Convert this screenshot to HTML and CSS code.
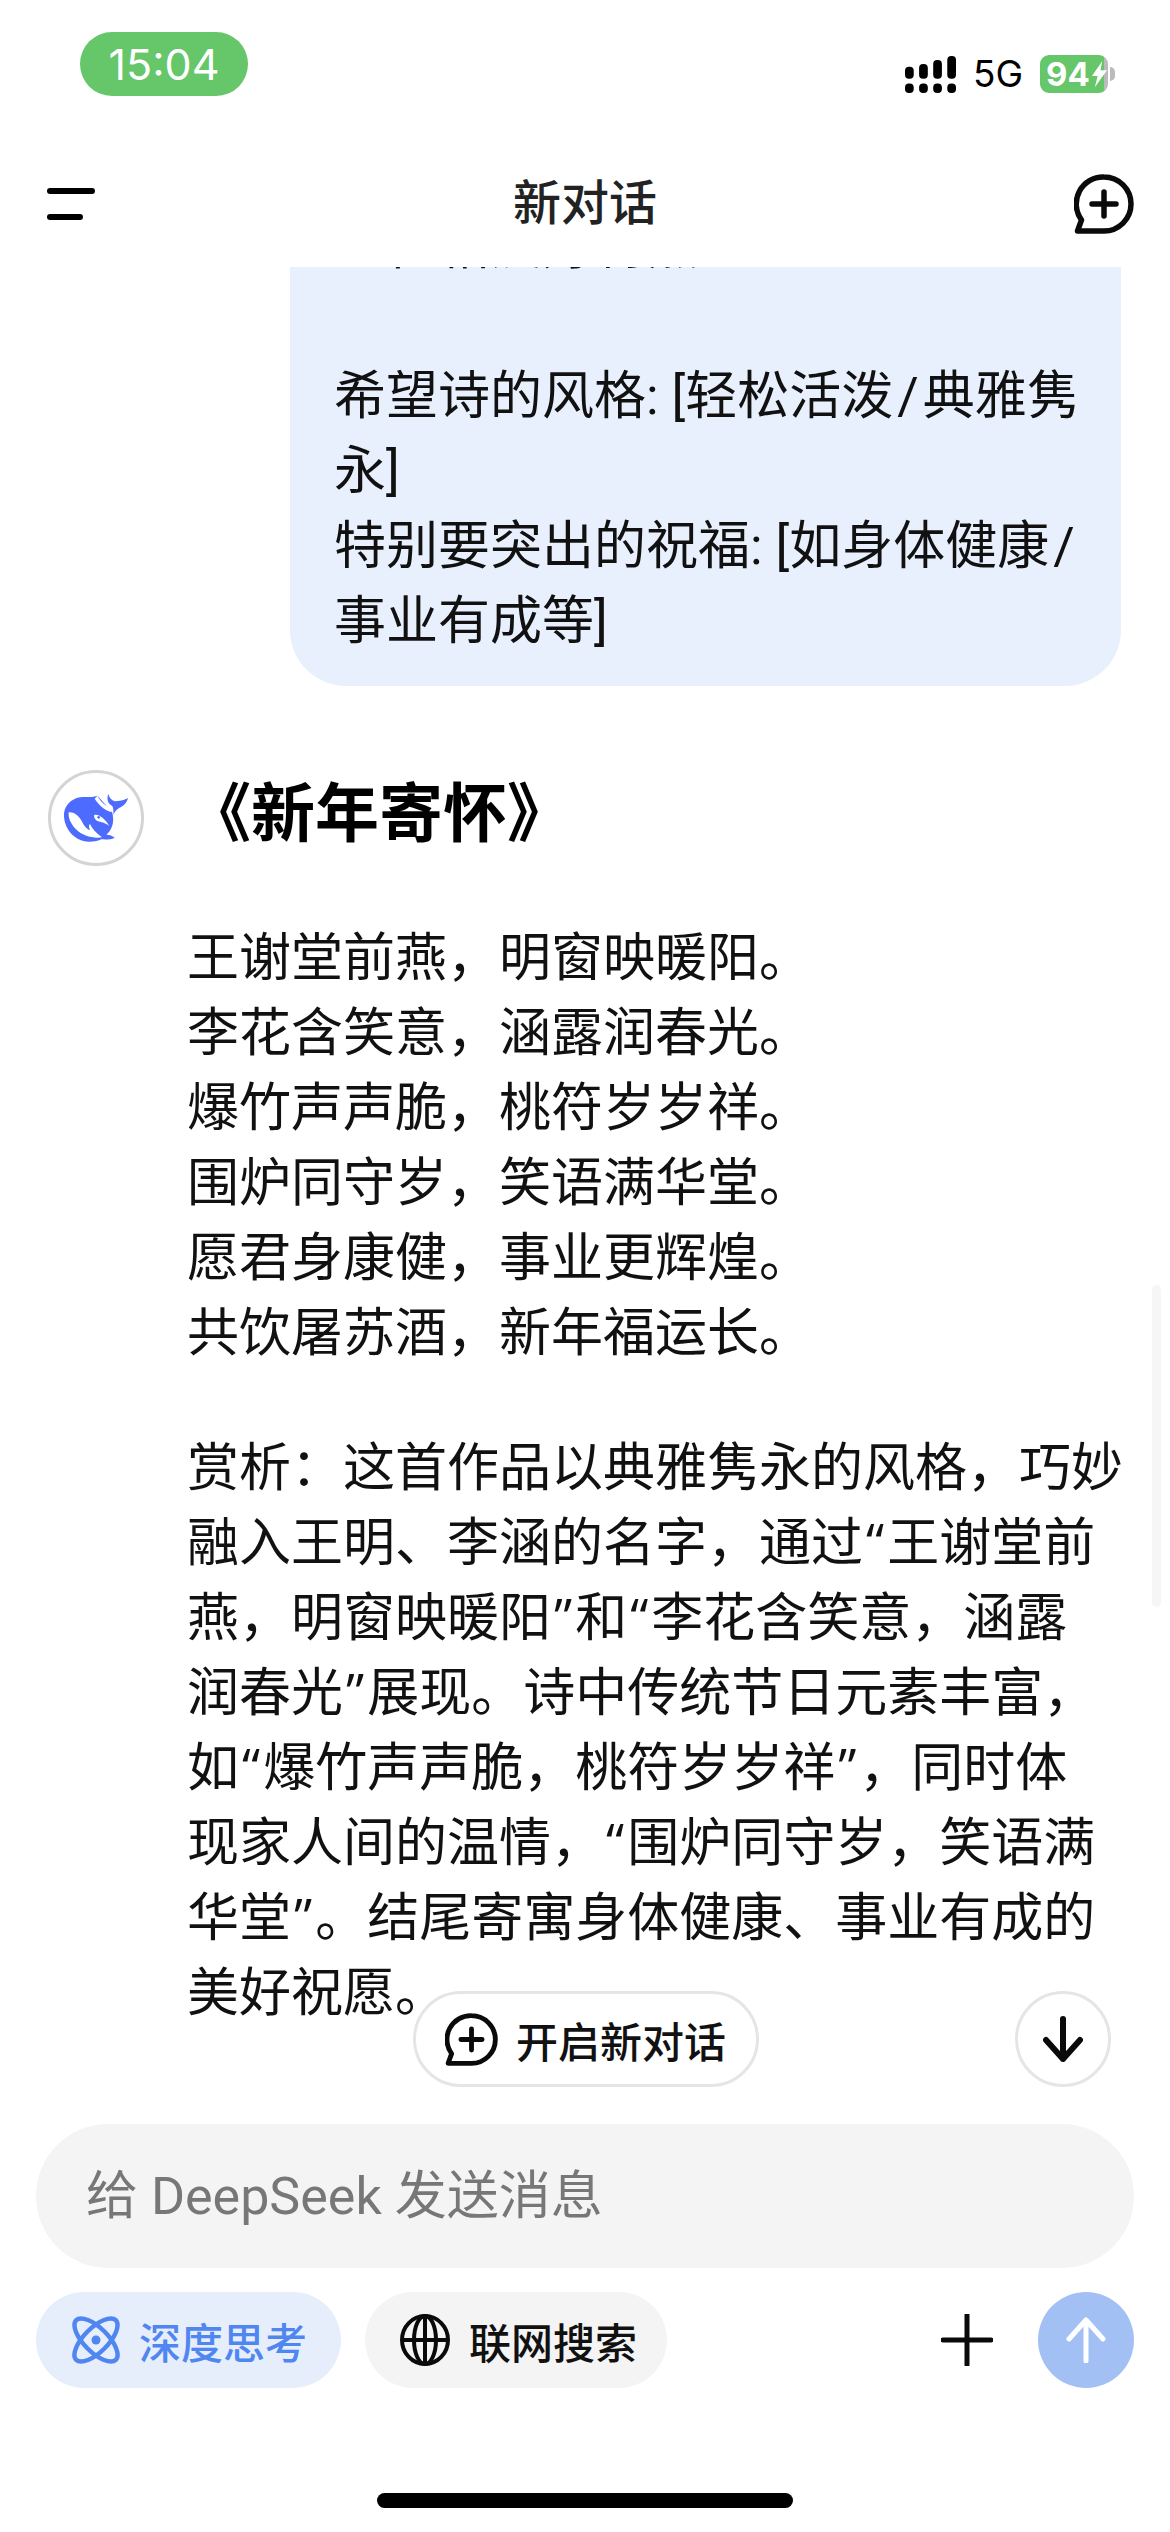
FILE: index.html

```html
<!DOCTYPE html>
<html lang="zh-CN">
<head>
    <meta charset="UTF-8">
    <meta name="viewport" content="width=device-width, initial-scale=1.0">
    <title>新对话</title>
    <link rel="stylesheet" href="styles.css">
</head>
<body>
    <div class="app">
        <!-- Status bar -->
        <div class="status">
            <div class="time">15:04</div>
            <div class="indicators">
                <svg class="signal" viewBox="0 0 152 110">
                    <rect x="0" y="32" width="26" height="36" rx="12"/>
                    <rect x="42" y="24" width="26" height="44" rx="12"/>
                    <rect x="84" y="12" width="26" height="56" rx="12"/>
                    <rect x="126" y="0" width="26" height="68" rx="12"/>
                    <rect x="0" y="82" width="26" height="28" rx="12"/>
                    <rect x="42" y="82" width="26" height="28" rx="12"/>
                    <rect x="84" y="82" width="26" height="28" rx="12"/>
                    <rect x="126" y="82" width="26" height="28" rx="12"/>
                </svg>
                <span class="net">5G</span>
                <div class="battery">
                    <div class="battery-body">
                        <span>94</span>
                        <svg class="bolt" viewBox="0 0 16 28"><path d="M11 0 L0 16 H6 L3 28 L16 10 H9 Z"/></svg>
                    </div>
                    <div class="battery-tip"></div>
                </div>
            </div>
        </div>

        <!-- Top bar -->
        <header class="topbar">
            <div class="menu"><span></span><span></span></div>
            <h1>新对话</h1>
            <svg class="new-icon" viewBox="0 0 60 60">
                <path class="bubble-line" d="M30 3 A27 27 0 0 1 30 57 H3.5 L7.5 46 A27 27 0 0 1 30 3 Z"/>
                <path class="bubble-line" d="M30 18 V42 M18 30 H42"/>
            </svg>
        </header>

        <!-- Conversation -->
        <main class="chat">
            <div class="user-msg">
                &emsp;性格爱好特点<br>
                <br>
                希望诗的风格: [轻松活泼<span class="slash">/</span>典雅隽<br>
                永]<br>
                特别要突出的祝福: [如身体健康<span class="slash">/</span><br>
                事业有成等]
            </div>

            <div class="answer">
                <div class="avatar">
                    <svg viewBox="0 0 192 144">
                        <path class="whale" d="M100 5 C78 13 55 6 38 12 C12 22 0 42 0 64 C0 102 30 143 75 143 C92 143 104 141 112 136 C125 137 140 137 152 131 C146 125 136 122 127 122 C140 110 150 92 147 68 C146 58 144 52 140 50 C126 32 112 18 100 5 Z"/>
                        <path class="whale" d="M133 0 C127 15 132 30 145 36 C148 42 149 50 148 62 C155 49 161 43 171 39 C183 33 190 22 192 12 C180 20 165 21 152 22 C143 19 136 12 133 0 Z"/>
                        <path class="whale-cut" d="M92 14 C102 30 120 48 142 54 L146 46 C128 38 110 24 100 5 Z"/>
                        <path class="whale-cut" d="M14 55 C30 52 46 66 56 86 C60 96 70 106 78 108 C74 100 74 94 78 90 C84 104 98 118 114 130 C86 134 56 126 36 106 C20 90 12 70 14 55 Z"/>
                        <path class="whale-cut" d="M90 64 C100 58 122 72 136 96 C124 86 110 84 102 82 C94 78 90 72 90 64 Z"/>
                        <circle class="whale" cx="104" cy="70" r="4"/>
                    </svg>
                </div>
                <div class="answer-body">
                    <h2>《新年寄怀》</h2>
                    <p>
                        王谢堂前燕，明窗映暖阳。<br>
                        李花含笑意，涵露润春光。<br>
                        爆竹声声脆，桃符岁岁祥。<br>
                        围炉同守岁，笑语满华堂。<br>
                        愿君身康健，事业更辉煌。<br>
                        共饮屠苏酒，新年福运长。
                    </p>
                    <p>
                        赏析：这首作品以典雅隽永的风格，巧妙<br>
                        融入王明、李涵的名字，通过<span class="q">“</span>王谢堂前<br>
                        燕，明窗映暖阳<span class="q">”</span>和<span class="q">“</span>李花含笑意，涵露<br>
                        润春光<span class="q">”</span>展现。诗中传统节日元素丰富，<br>
                        如<span class="q">“</span>爆竹声声脆，桃符岁岁祥<span class="q">”</span>，同时体<br>
                        现家人间的温情，<span class="q">“</span>围炉同守岁，笑语满<br>
                        华堂<span class="q">”</span>。结尾寄寓身体健康、事业有成的<br>
                        美好祝愿。
                    </p>
                </div>
            </div>

            <div class="scrollbar"></div>

            <button class="new-chat">
                <svg viewBox="0 0 60 60">
                    <path class="bubble-line" d="M30 3 A27 27 0 0 1 30 57 H3.5 L7.5 46 A27 27 0 0 1 30 3 Z"/>
                    <path class="bubble-line" d="M30 18 V42 M18 30 H42"/>
                </svg>
                开启新对话
            </button>
            <button class="to-bottom">
                <svg viewBox="0 0 40 46"><path d="M20 3 V43 M3 24 L20 43 L37 24"/></svg>
            </button>
        </main>

        <!-- Composer -->
        <footer class="composer">
            <div class="input">给 DeepSeek 发送消息</div>
            <div class="tools">
                <div class="chip chip-on">
                    <svg viewBox="0 0 48 48">
                        <ellipse cx="24" cy="24" rx="28" ry="12" transform="rotate(45 24 24)"/>
                        <ellipse cx="24" cy="24" rx="28" ry="12" transform="rotate(-45 24 24)"/>
                        <circle class="dot" cx="24" cy="24" r="4.5"/>
                    </svg>
                    深度思考
                </div>
                <div class="chip">
                    <svg viewBox="0 0 50 52">
                        <ellipse cx="25" cy="26" rx="23" ry="24"/>
                        <ellipse cx="25" cy="26" rx="11" ry="24"/>
                        <path d="M25 2 V50 M2 26 H48"/>
                    </svg>
                    联网搜索
                </div>
                <svg class="add" viewBox="0 0 52 52"><path d="M26 1 V51 M2 26 H50"/></svg>
                <button class="send">
                    <svg viewBox="0 0 40 46"><path d="M20 44 V3 M3 22 L20 3 L37 22"/></svg>
                </button>
            </div>
            <div class="home-bar"></div>
        </footer>
    </div>
</body>
</html>
```

FILE: styles.css

```css
* {
    margin: 0;
    padding: 0;
    box-sizing: border-box;
}

body {
    font-family: Roboto, "Noto Sans CJK SC", sans-serif;
    background: #fff;
    color: #111;
}

.app {
    width: 1170px;
    height: 2532px;
    display: flex;
    flex-direction: column;
    overflow: hidden;
}

/* Status bar */
.status {
    height: 141px;
    flex: none;
    display: flex;
    justify-content: space-between;
    align-items: flex-start;
    padding: 32px 55px 0 80px;
    font-family: Inter, sans-serif;
}

.time {
    width: 168px;
    height: 64px;
    border-radius: 32px;
    background: #66c66a;
    color: #fff;
    font-size: 43px;
    line-height: 64px;
    text-align: center;
}

.indicators {
    display: flex;
    align-items: center;
    margin-top: 23px;
}

.signal {
    width: 51px;
    height: 37px;
    fill: #000;
}

.net {
    font-size: 37px;
    line-height: 38px;
    margin: 0 17px;
    color: #000;
}

.battery {
    display: flex;
    align-items: center;
}

.battery-body {
    width: 68px;
    height: 38px;
    border-radius: 9px;
    background: linear-gradient(to right, #66c66a 94%, #bbb 94%);
    color: #fff;
    font-size: 33px;
    font-weight: 700;
    line-height: 38px;
    display: flex;
    align-items: center;
    padding-left: 6px;
}

.bolt {
    width: 15px;
    height: 28px;
    margin-left: 2px;
    fill: #fff;
}

.battery-tip {
    width: 5px;
    height: 14px;
    margin-left: 2px;
    background: #bbb;
    border-radius: 0 7px 7px 0;
}

/* Top bar */
.topbar {
    height: 126px;
    flex: none;
    display: grid;
    grid-template-columns: 1fr auto 1fr;
    align-items: center;
    padding: 0 36px 0 47px;
}

.menu {
    display: flex;
    flex-direction: column;
    gap: 20px;
}

.menu span {
    display: block;
    width: 48px;
    height: 6px;
    border-radius: 3px;
    background: #000;
}

.menu span:last-child {
    width: 36px;
}

.topbar h1 {
    font-size: 48px;
    font-weight: 500;
    line-height: 64px;
    color: #222;
    margin-right: 11px;
}

.new-icon {
    width: 60px;
    height: 60px;
    justify-self: end;
}

.bubble-line {
    fill: none;
    stroke: #0a0a0a;
    stroke-width: 5.5;
    stroke-linecap: round;
    stroke-linejoin: round;
}

/* Conversation */
.chat {
    flex: 1;
    position: relative;
    overflow: hidden;
    font-size: 52px;
    line-height: 75px;
}

.user-msg {
    margin: -58px 49px 0 290px;
    padding: 0 30px 27px 44px;
    background: #e9f0fd;
    border-radius: 0 0 56px 56px;
    white-space: nowrap;
}

.slash {
    margin: 0 4px;
}

.q {
    margin: 0 3px;
}

.answer {
    display: flex;
    gap: 43px;
    margin-top: 84px;
    padding-left: 48px;
}

.avatar {
    width: 96px;
    height: 96px;
    flex: none;
    border: 3px solid #d4d4d4;
    border-radius: 50%;
    display: flex;
    align-items: center;
    justify-content: center;
}

.avatar svg {
    width: 64px;
    height: 48px;
}

.whale {
    fill: #4d6bfe;
}

.whale-cut {
    fill: #fff;
}

.answer-body h2 {
    font-size: 64px;
    font-weight: 700;
    line-height: 90px;
    color: #000;
    margin-bottom: 58px;
}

.answer-body p {
    margin-bottom: 60px;
    white-space: nowrap;
    font-family: "Open Sans", "Noto Sans CJK SC", sans-serif;
}

.scrollbar {
    position: absolute;
    top: 1018px;
    right: 9px;
    width: 9px;
    height: 322px;
    border-radius: 5px;
    background: #f6f6f6;
}

.new-chat {
    position: absolute;
    left: 413px;
    bottom: 37px;
    width: 346px;
    height: 96px;
    border: 3px solid #e5e5e5;
    border-radius: 48px;
    background: #fff;
    color: #111;
    font-family: inherit;
    font-size: 42px;
    font-weight: 500;
    display: flex;
    align-items: center;
    gap: 18px;
    padding-left: 29px;
}

.new-chat svg {
    width: 53px;
    height: 53px;
}

.to-bottom {
    position: absolute;
    right: 59px;
    bottom: 37px;
    width: 96px;
    height: 96px;
    border: 3px solid #e5e5e5;
    border-radius: 50%;
    background: #fff;
    display: flex;
    align-items: center;
    justify-content: center;
}

.to-bottom svg {
    width: 40px;
    height: 46px;
    fill: none;
    stroke: #0a0a0a;
    stroke-width: 6;
    stroke-linecap: round;
    stroke-linejoin: round;
}

/* Composer */
.composer {
    flex: none;
    padding: 0 36px 24px;
    display: flex;
    flex-direction: column;
}

.input {
    height: 144px;
    border-radius: 72px;
    background: #f4f4f4;
    color: #777;
    font-size: 52px;
    line-height: 146px;
    padding-left: 50px;
}

.tools {
    display: flex;
    align-items: center;
    gap: 24px;
    margin-top: 24px;
}

.chip {
    height: 96px;
    border-radius: 48px;
    background: #f4f4f4;
    color: #111;
    font-size: 42px;
    font-weight: 500;
    display: flex;
    align-items: center;
    gap: 19px;
    padding: 0 30px 0 35px;
}

.chip svg {
    width: 50px;
    height: 52px;
    fill: none;
    stroke: #0a0a0a;
    stroke-width: 4;
}

.chip-on {
    background: #e6eefc;
    color: #4f86f0;
    padding: 0 34px 0 36px;
}

.chip-on svg {
    width: 48px;
    height: 48px;
    overflow: visible;
    stroke: #4f86f0;
    stroke-width: 4.5;
}

.chip-on .dot {
    fill: #4f86f0;
    stroke: none;
}

.add {
    width: 52px;
    height: 52px;
    margin-left: auto;
    fill: none;
    stroke: #0a0a0a;
    stroke-width: 5;
    stroke-linecap: round;
}

.send {
    width: 96px;
    height: 96px;
    margin-left: 21px;
    border: none;
    border-radius: 50%;
    background: #a3c0f5;
    display: flex;
    align-items: center;
    justify-content: center;
}

.send svg {
    width: 40px;
    height: 46px;
    fill: none;
    stroke: #fff;
    stroke-width: 5;
    stroke-linecap: round;
    stroke-linejoin: round;
}

.home-bar {
    width: 416px;
    height: 15px;
    margin-top: 105px;
    align-self: center;
    border-radius: 8px;
    background: #000;
}
```
